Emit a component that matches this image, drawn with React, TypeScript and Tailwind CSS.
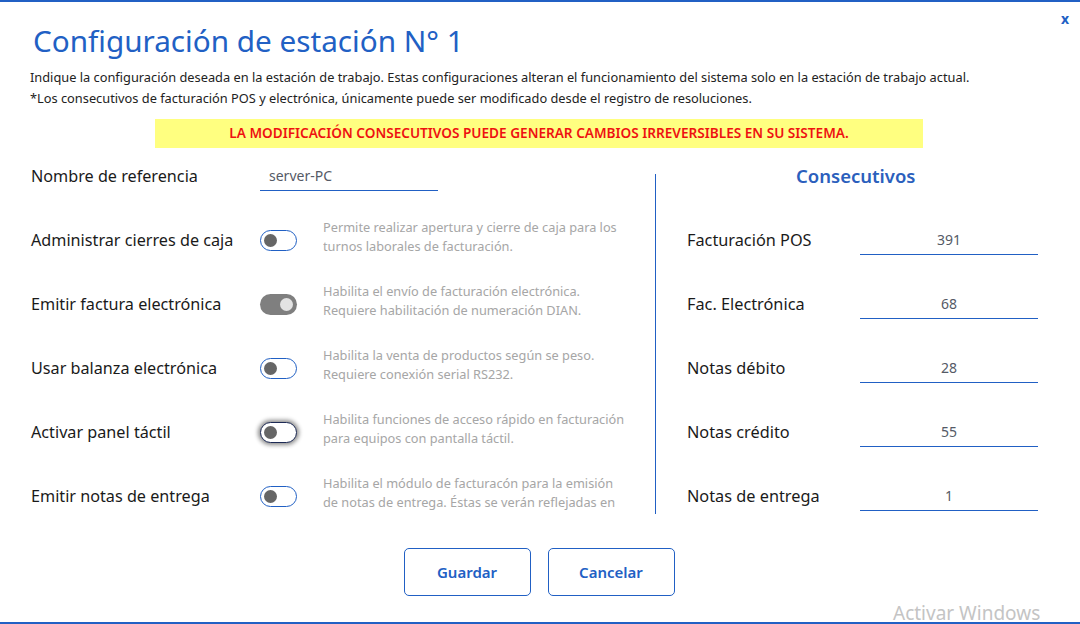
import React, { useState } from 'react';

const font = { fontFamily: '"Noto Sans", "Open Sans", sans-serif' };

// Toggle switch, drawn like the WPF style in the screenshot
const Toggle = ({ state }: { state: 'off' | 'disabledOn' | 'focused' }) => {
  if (state === 'disabledOn') {
    return (
      <div className="w-[37px] h-[21px] rounded-full bg-[#7f7f7f] flex items-center justify-end pr-[4px]">
        <div className="w-[13px] h-[13px] rounded-full bg-[#e3e3e3]" />
      </div>
    );
  }
  return (
    <div
      className={`w-[37px] h-[21px] rounded-full bg-white border-[1.5px] flex items-center pl-[3px] ${
        state === 'focused' ? 'border-[#1d2a55] shadow-[0_0_4px_2px_rgba(0,0,0,0.45)]' : 'border-[#2160c4]'
      }`}
    >
      <div className="w-[13px] h-[13px] rounded-full bg-[#666666]" />
    </div>
  );
};

const OptionRow = ({
  label,
  lines,
  state,
}: {
  label: string;
  lines: string[];
  state: 'off' | 'disabledOn' | 'focused';
}) => (
  <div className="h-[40px] flex items-center">
    <div className="w-[229px] text-[16.2px] text-[#1a1a1a]">{label}</div>
    <div className="w-[63px]">
      <Toggle state={state} />
    </div>
    <div className="h-[38px] overflow-hidden -mt-[6px] text-[12.75px] leading-[19px] text-[#a6a6a6]">
      {lines.map((l, i) => (
        <div key={i} className="whitespace-nowrap">{l}</div>
      ))}
    </div>
  </div>
);

const ConsecRow = ({ label, value }: { label: string; value: string }) => (
  <div className="h-[40px] flex items-center">
    <div className="w-[173px] text-[16.3px] text-[#1a1a1a]">{label}</div>
    <div className="w-[178px] h-[31px] mt-[-1px] border-b border-[#2160c4] flex items-center justify-center text-[14px] text-[#555a66]">
      {value}
    </div>
  </div>
);

const App: React.FC = () => {
  const [name] = useState('server-PC');

  const options = [
    {
      label: 'Administrar cierres de caja',
      lines: ['Permite realizar apertura y cierre de caja para los', 'turnos laborales de facturación.'],
      state: 'off' as const,
    },
    {
      label: 'Emitir factura electrónica',
      lines: ['Habilita el envío de facturación electrónica.', 'Requiere habilitación de numeración DIAN.'],
      state: 'disabledOn' as const,
    },
    {
      label: 'Usar balanza electrónica',
      lines: ['Habilita la venta de productos según se peso.', 'Requiere conexión serial RS232.'],
      state: 'off' as const,
    },
    {
      label: 'Activar panel táctil',
      lines: ['Habilita funciones de acceso rápido en facturación', 'para equipos con pantalla táctil.'],
      state: 'focused' as const,
    },
    {
      label: 'Emitir notas de entrega',
      lines: ['Habilita el módulo de facturacón para la emisión', 'de notas de entrega. Éstas se verán reflejadas en'],
      state: 'off' as const,
    },
  ];

  const consecutivos = [
    { label: 'Facturación POS', value: '391' },
    { label: 'Fac. Electrónica', value: '68' },
    { label: 'Notas débito', value: '28' },
    { label: 'Notas crédito', value: '55' },
    { label: 'Notas de entrega', value: '1' },
  ];

  return (
    <div className="w-[1080px] h-[624px] relative bg-white border-t-2 border-b-2 border-[#2160c4] overflow-hidden" style={font}>
      {/* close */}
      <div className="absolute right-[11px] top-[6px] text-[14px] font-bold text-[#2160c4]">x</div>

      {/* header */}
      <h1 className="pl-[33px] pt-[20px] text-[29.7px] leading-[38px] text-[#2160c4]">Configuración de estación N° 1</h1>
      <div className="pl-[30px] mt-[7px] text-[12.8px] leading-[21px] text-[#222222]">
        <div>
          Indique la configuración deseada en la estación de trabajo. Estas configuraciones alteran el funcionamiento del
          sistema solo en la estación de trabajo actual.
        </div>
        <div>*Los consecutivos de facturación POS y electrónica, únicamente puede ser modificado desde el registro de resoluciones.</div>
      </div>

      {/* warning */}
      <div className="ml-[155px] mt-[10px] w-[768px] h-[29px] bg-[#ffff80] flex items-center justify-center text-[13.6px] font-semibold text-[#ee1111]">
        LA MODIFICACIÓN CONSECUTIVOS PUEDE GENERAR CAMBIOS IRREVERSIBLES EN SU SISTEMA.
      </div>

      {/* body */}
      <div className="flex mt-[8px]">
        <div className="w-[655px] pl-[31px] flex flex-col gap-[24px]">
          <div className="h-[40px] flex items-center">
            <div className="w-[229px] text-[16.2px] text-[#1a1a1a]">Nombre de referencia</div>
            <div className="w-[178px] h-[31px] mt-[-1px] border-b border-[#2160c4] flex items-center pl-[9px] text-[14px] text-[#555a66]">
              {name}
            </div>
          </div>
          {options.map((o) => (
            <OptionRow key={o.label} label={o.label} lines={o.lines} state={o.state} />
          ))}
        </div>

        <div className="w-px h-[340px] mt-[18px] bg-[#2160c4]" />

        <div className="pl-[31px] flex flex-col gap-[24px]">
          <div className="h-[40px] flex items-center pl-[109px] text-[18.5px] font-semibold text-[#2b5fbd]">Consecutivos</div>
          {consecutivos.map((c) => (
            <ConsecRow key={c.label} label={c.label} value={c.value} />
          ))}
        </div>
      </div>

      {/* actions */}
      <div className="flex justify-center gap-[17px] mt-[32px] pr-[2px]">
        <button className="w-[127px] h-[48px] rounded-[5px] border border-[#2160c4] text-[15px] font-semibold text-[#2160c4] bg-white">
          Guardar
        </button>
        <button className="w-[127px] h-[48px] rounded-[5px] border border-[#2160c4] text-[15px] font-semibold text-[#2160c4] bg-white">
          Cancelar
        </button>
      </div>

      {/* windows activation watermark */}
      <div className="absolute left-[893px] top-[599px] text-[19px] text-[#c4c4c4] leading-[25px]">Activar Windows</div>
    </div>
  );
};

export default App;
